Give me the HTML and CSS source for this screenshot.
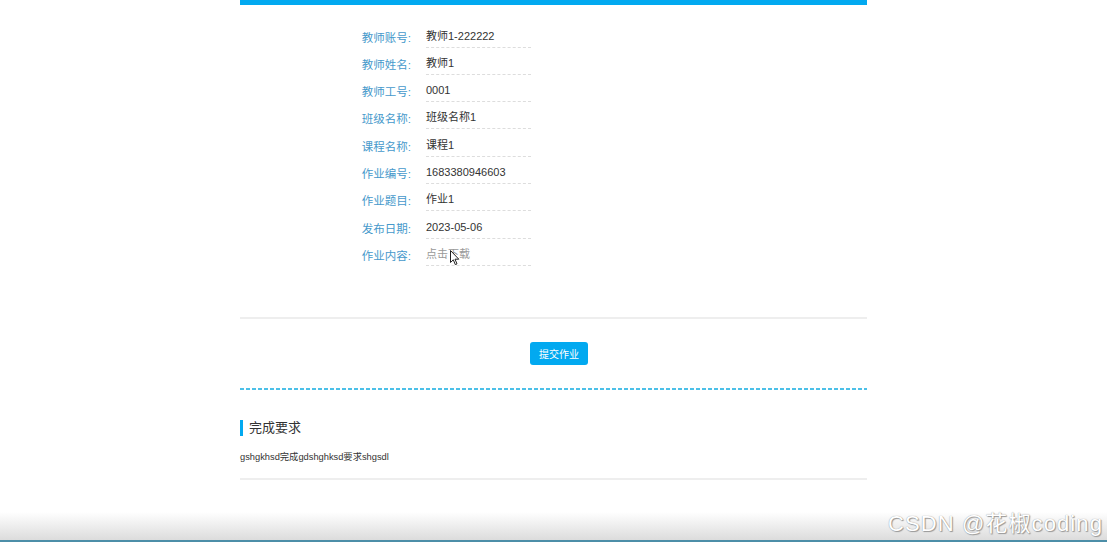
FILE: index.html
```html
<!DOCTYPE html>
<html lang="zh-CN">
<head>
    <meta charset="UTF-8">
    <meta name="viewport" content="width=device-width, initial-scale=1.0">
    <title>作业详情</title>
    <link rel="stylesheet" href="styles.css">
</head>
<body>
    <div class="page">
        <div class="container">
            <div class="top-bar"></div>

            <div class="info">
                <div class="row"><span class="label">教师账号:</span><span class="value">教师1-222222</span></div>
                <div class="row"><span class="label">教师姓名:</span><span class="value">教师1</span></div>
                <div class="row"><span class="label">教师工号:</span><span class="value">0001</span></div>
                <div class="row"><span class="label">班级名称:</span><span class="value">班级名称1</span></div>
                <div class="row"><span class="label">课程名称:</span><span class="value">课程1</span></div>
                <div class="row"><span class="label">作业编号:</span><span class="value">1683380946603</span></div>
                <div class="row"><span class="label">作业题目:</span><span class="value">作业1</span></div>
                <div class="row"><span class="label">发布日期:</span><span class="value">2023-05-06</span></div>
                <div class="row">
                    <span class="label">作业内容:</span>
                    <span class="value link">点击下载
                        <svg class="cursor" width="10" height="16" viewBox="0 0 10 16" xmlns="http://www.w3.org/2000/svg">
                            <path d="M0.5 0.5 L0.5 12.5 L3.3 9.8 L5.3 14.6 L7 13.9 L5 9.2 L8.8 9.2 Z" fill="#fff" stroke="#222" stroke-width="1" stroke-linejoin="round"/>
                        </svg>
                    </span>
                </div>
            </div>

            <div class="divider"></div>

            <div class="actions">
                <button class="btn-submit" type="button">提交作业</button>
            </div>

            <div class="dashed"></div>

            <h3 class="section-title">完成要求</h3>
            <p class="section-text">gshgkhsd完成gdshghksd要求shgsdl</p>

            <div class="divider"></div>
        </div>

        <div class="footer-strip">
            <span class="watermark">CSDN @花椒coding</span>
        </div>
    </div>
</body>
</html>
```

FILE: styles.css
```css
:root {
    --primary-color: #02a9f0;
    --label-color: #4699cb;
    --text-color: #333;
}

* {
    box-sizing: border-box;
    margin: 0;
    padding: 0;
}

body {
    font-family: 'Liberation Sans', 'Noto Sans CJK SC', sans-serif;
    background: #fff;
    color: var(--text-color);
}

.page {
    min-height: 100vh;
    display: flex;
    flex-direction: column;
}

.container {
    width: 627px;
    margin: 0 auto;
}

.top-bar {
    height: 5px;
    background: var(--primary-color);
}

.info {
    margin-top: 19.5px;
}

.row {
    display: flex;
    height: 27.3px;
}

.label {
    width: 100px;
    margin-left: 71px;
    padding-top: 2px;
    text-align: right;
    font-size: 11.5px;
    line-height: 22px;
    color: var(--label-color);
}

.value {
    position: relative;
    width: 105px;
    height: 23px;
    margin-left: 15px;
    font-size: 11px;
    line-height: 22px;
    border-bottom: 1px dashed #dddddd;
    white-space: nowrap;
}

.value.link {
    color: #999;
}

.cursor {
    position: absolute;
    left: 24px;
    top: 7px;
}

.divider {
    height: 2px;
    background: #eeeeee;
}

.info + .divider {
    margin-top: 47px;
}

.actions {
    display: flex;
    justify-content: center;
    padding: 23px 0 23px 11px;
}

.btn-submit {
    height: 23px;
    padding: 0 9px;
    border: none;
    border-radius: 3px;
    background: var(--primary-color);
    color: #fff;
    font-family: inherit;
    font-size: 10px;
    cursor: pointer;
}

.dashed {
    height: 2px;
    background: repeating-linear-gradient(90deg, #4cc0e8 0 4px, transparent 4px 6px);
}

.section-title {
    margin-top: 30px;
    padding-left: 6px;
    border-left: 3px solid var(--primary-color);
    font-size: 13px;
    font-weight: normal;
    line-height: 16px;
    color: #333;
}

.section-text {
    margin-top: 14px;
    font-size: 9.3px;
    line-height: 14px;
    color: #333;
}

.section-text + .divider {
    margin-top: 14px;
}

.footer-strip {
    position: relative;
    margin-top: auto;
    height: 30px;
    background: linear-gradient(#ffffff, #dcdcdc);
    border-bottom: 2px solid #4c8ea8;
}

.watermark {
    position: absolute;
    right: 4px;
    bottom: 5px;
    font-size: 22px;
    line-height: 1;
    letter-spacing: 1.1px;
    color: #fff;
    text-shadow: 0 0 1px #888, 1px 1px 1px #999;
    white-space: nowrap;
}
```
